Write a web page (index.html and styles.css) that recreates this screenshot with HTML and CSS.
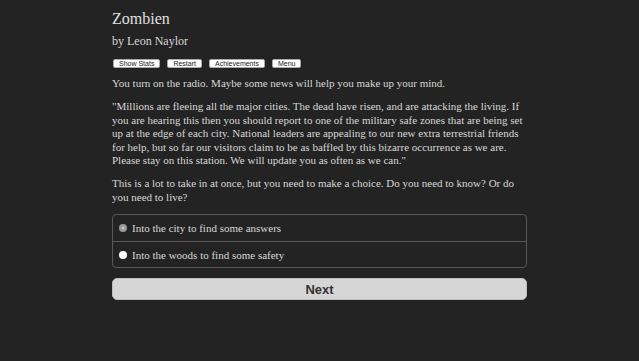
FILE: index.html
```html
<!DOCTYPE html>
<html lang="en">
<head>
<meta charset="UTF-8">
<meta name="viewport" content="width=device-width, initial-scale=1.0">
<title>Zombien</title>
<link rel="stylesheet" href="styles.css">
</head>
<body>

<div class="container">
  <h1 class="title">Zombien</h1>
  <h2 class="author">by Leon Naylor</h2>

  <div class="buttons">
    <button class="small-btn">Show Stats</button>
    <button class="small-btn">Restart</button>
    <button class="small-btn">Achievements</button>
    <button class="small-btn">Menu</button>
  </div>

  <div class="text">
    <p>You turn on the radio. Maybe some news will help you make up your mind.</p>
    <p>"Millions are fleeing all the major cities. The dead have risen, and are attacking the living. If you are hearing this then you should report to one of the military safe zones that are being set up at the edge of each city. National leaders are appealing to our new extra terrestrial friends for help, but so far our visitors claim to be as baffled by this bizarre occurrence as we are. Please stay on this station. We will update you as often as we can."</p>
    <p>This is a lot to take in at once, but you need to make a choice. Do you need to know? Or do you need to live?</p>
  </div>

  <form class="choice">
    <div class="options">
      <label class="option"><span class="radio checked"></span>Into the city to find some answers</label>
      <label class="option"><span class="radio"></span>Into the woods to find some safety</label>
    </div>
    <button type="button" class="next-btn">Next</button>
  </form>
</div>

</body>
</html>
```

FILE: styles.css
```css
body {
  margin: 0;
  background: #232323;
  color: #d8d8d8;
  font-family: "Liberation Serif", serif;
}
.container {
  width: 415px;
  margin: 0 auto;
  padding-top: 9px;
}
.title {
  margin: 0;
  font-size: 16px;
  line-height: 20px;
  font-weight: normal;
  color: #e0e0e0;
}
.author {
  margin: 5px 0 0 0;
  font-size: 12px;
  line-height: 15px;
  font-weight: normal;
}
.buttons {
  display: flex;
  gap: 7px;
  margin-top: 10px;
  padding-left: 1px;
}
.small-btn {
  height: 9px;
  padding: 0 5px;
  font-family: "Liberation Sans", Arial, sans-serif;
  font-size: 7px;
  line-height: 7px;
  color: #222;
  background: #fff;
  border: 1px solid #aaa;
  border-radius: 2px;
}
.text {
  margin-right: -6px;
  margin-top: 9px;
}
.text p {
  margin: 0 0 10px 0;
  font-size: 11px;
  line-height: 13.4px;
}
.choice {
  margin-top: 10px;
}
.options {
  border: 1px solid #575757;
  border-radius: 4px;
}
.option {
  display: flex;
  align-items: center;
  gap: 5px;
  height: 25.5px;
  padding-left: 6px;
  font-size: 11px;
}
.option + .option {
  border-top: 1px solid #575757;
}
.radio {
  width: 8px;
  height: 8px;
  border-radius: 50%;
  background: #fff;
  box-sizing: border-box;
}
.radio.checked {
  background: #9a9a9a;
  position: relative;
}
.radio.checked::after {
  content: "";
  position: absolute;
  left: 3px;
  top: 3px;
  width: 2px;
  height: 2px;
  border-radius: 50%;
  background: #e6e6e6;
}
.next-btn {
  display: block;
  width: 100%;
  height: 22px;
  margin-top: 10px;
  background: #d6d6d6;
  border: 1px solid #bdbdbd;
  border-radius: 5px;
  font-family: "Liberation Sans", Arial, sans-serif;
  font-size: 13px;
  font-weight: bold;
  color: #333;
}
```
